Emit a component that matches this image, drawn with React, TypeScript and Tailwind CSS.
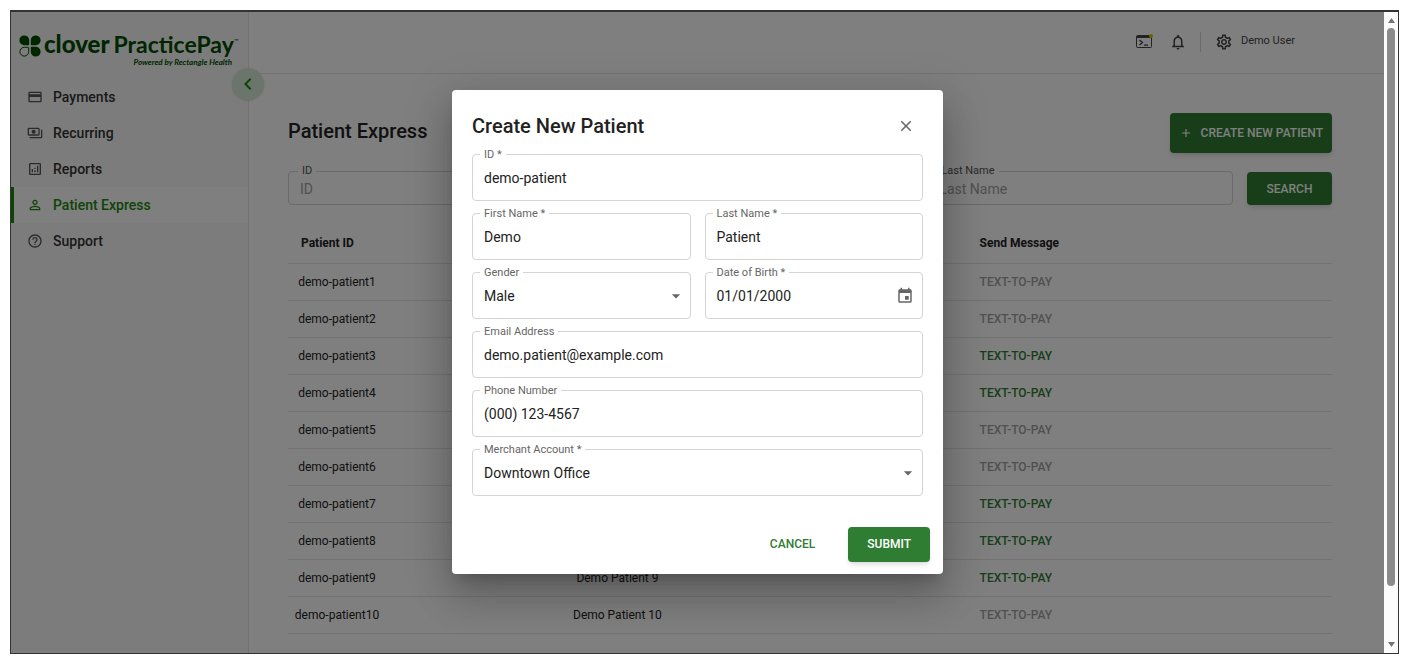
import { useState } from "react"
import type { ReactNode } from "react"
import {
  MdAdd,
  MdArrowDropDown,
  MdChevronLeft,
  MdClose,
  MdCreditCard,
  MdEvent,
  MdHelpOutline,
  MdNotificationsNone,
  MdOutlineAnalytics,
  MdOutlinePayments,
  MdOutlineSettings,
  MdPersonOutline,
} from "react-icons/md"

const navItems = [
  { label: "Payments", icon: MdCreditCard },
  { label: "Recurring", icon: MdOutlinePayments },
  { label: "Reports", icon: MdOutlineAnalytics },
  { label: "Patient Express", icon: MdPersonOutline, active: true },
  { label: "Support", icon: MdHelpOutline },
]

const patients = [
  { id: "demo-patient1", name: "Demo Patient 1", canText: false },
  { id: "demo-patient2", name: "Demo Patient 2", canText: false },
  { id: "demo-patient3", name: "Demo Patient 3", canText: true },
  { id: "demo-patient4", name: "Demo Patient 4", canText: true },
  { id: "demo-patient5", name: "Demo Patient 5", canText: false },
  { id: "demo-patient6", name: "Demo Patient 6", canText: false },
  { id: "demo-patient7", name: "Demo Patient 7", canText: true },
  { id: "demo-patient8", name: "Demo Patient 8", canText: true },
  { id: "demo-patient9", name: "Demo Patient 9", canText: true },
  { id: "demo-patient10", name: "Demo Patient 10", canText: false },
]

function Logo() {
  return (
    <div className="flex h-[67px] flex-col pt-5 pl-2 font-[Lato,sans-serif] whitespace-nowrap text-[#004d00]">
      <div className="flex h-6 items-center">
        <svg className="mt-1 mr-[3px] h-[22px] w-[22px] shrink-0" viewBox="0 0 22 22" fill="currentColor">
          <path d="M5.3 0.4A4.9 4.9 0 0 1 10.2 5.3V9.4Q10.2 10.2 9.4 10.2H5.3A4.9 4.9 0 0 1 5.3 0.4Z" />
          <path d="M16.7 0.4A4.9 4.9 0 0 0 11.8 5.3V9.4Q11.8 10.2 12.6 10.2H16.7A4.9 4.9 0 0 0 16.7 0.4Z" />
          <path d="M16.7 21.6A4.9 4.9 0 0 1 11.8 16.7V12.6Q11.8 11.8 12.6 11.8H16.7A4.9 4.9 0 0 1 16.7 21.6Z" />
          <path
            d="M5.3 21.1A4.4 4.4 0 0 0 9.7 16.7V12.7Q9.7 12.3 9.3 12.3H5.3A4.4 4.4 0 0 0 5.3 21.1Z"
            fill="none"
            stroke="currentColor"
            strokeWidth="1"
          />
        </svg>
        <span className="text-2xl leading-6 font-black">clover</span>
        <span className="ml-1 text-[23px] leading-6 font-bold">PracticePay</span>
        <sup className="text-[6px]">™</sup>
      </div>
      <p className="pr-4 text-right text-[8px] leading-3 font-bold italic">Powered by Rectangle Health</p>
    </div>
  )
}

function Sidebar() {
  return (
    <aside className="relative w-[238px] shrink-0 border-r border-neutral-200 bg-[#f9f9f9]">
      <Logo />
      <nav>
        {navItems.map(({ label, icon: Icon, active }) => (
          <a
            key={label}
            href="#"
            className={
              active
                ? "flex h-9 items-center gap-[10px] border-l-3 border-[#1b8a0b] bg-white pl-[13px] text-sm font-medium text-[#1b8a0b]"
                : "flex h-9 items-center gap-[10px] border-l-3 border-transparent pl-[13px] text-sm font-medium text-[#333]"
            }
          >
            <Icon className={active ? "h-4 w-4" : "h-4 w-4 text-[#555]"} />
            {label}
          </a>
        ))}
      </nav>
      <button
        aria-label="Collapse menu"
        className="absolute top-14 -right-4 flex h-8 w-8 items-center justify-center rounded-full bg-[#d6ead7] text-[#1b8a0b] shadow"
      >
        <MdChevronLeft className="h-6 w-6" />
      </button>
    </aside>
  )
}

function Header() {
  return (
    <header className="flex h-[62px] items-center justify-end border-b border-neutral-200 pr-[89px] pb-[2px] text-[#444]">
      <button aria-label="Terminal" className="relative mr-4">
        <svg className="h-[18px] w-[18px]" viewBox="0 0 18 18" fill="none" stroke="currentColor">
          <rect x="1.5" y="2.5" width="15" height="12" rx="1" />
          <path d="M1.5 4H16.5" strokeWidth="2" />
          <path d="M4.5 7L7.5 9.5L4.5 12M9 12.2H13" strokeWidth="1.3" />
        </svg>
        <span className="absolute top-px right-0 h-1 w-1 rounded-full bg-[#e6c200]" />
      </button>
      <button aria-label="Notifications" className="mr-[13px]">
        <MdNotificationsNone className="h-[18px] w-[18px]" />
      </button>
      <span className="mr-[14px] h-5 w-px bg-neutral-300" />
      <button className="flex items-center gap-2 text-[11px]">
        <MdOutlineSettings className="h-[18px] w-[18px]" />
        Demo User
      </button>
    </header>
  )
}

function SearchField({ id, label }: { id: string; label: string }) {
  return (
    <fieldset className="h-10 min-w-0 flex-1 rounded border border-neutral-300 pr-2 pl-[7px]">
      <legend className="ml-[2px] px-1 text-[11px] leading-3 text-[#555]">
        <label htmlFor={id}>{label}</label>
      </legend>
      <input
        id={id}
        placeholder={label}
        className="block h-6 w-full pl-1 text-sm outline-none placeholder:text-neutral-400"
      />
    </fieldset>
  )
}

function PatientTable() {
  return (
    <table className="mt-[18px] w-full table-fixed border-collapse text-left text-xs text-[#222]">
      <thead>
        <tr className="h-10 border-b border-neutral-200">
          <th className="w-[26%] pl-[13px] font-bold">Patient ID</th>
          <th className="w-[39%] pl-[13px] font-bold">Patient Name</th>
          <th className="pl-[13px] font-bold">Send Message</th>
        </tr>
      </thead>
      <tbody>
        {patients.map((p) => (
          <tr key={p.id} className="h-[37px] border-b border-neutral-200">
            <td>
              <button className="w-[98px] text-center">{p.id}</button>
            </td>
            <td>
              <button className="w-[116px] text-center">{p.name}</button>
            </td>
            <td className="pl-[13px]">
              <button
                disabled={!p.canText}
                className={p.canText ? "font-medium text-[#2e7d32]" : "font-medium text-neutral-400"}
              >
                TEXT-TO-PAY
              </button>
            </td>
          </tr>
        ))}
      </tbody>
    </table>
  )
}

function Field({ id, label, children }: { id: string; label: string; children: ReactNode }) {
  return (
    <fieldset className="relative h-[52px] min-w-0 rounded border border-neutral-300 pr-2 pl-[7px]">
      <legend className="px-1 text-[11px] leading-3 text-[#666]">
        <label htmlFor={id}>{label}</label>
      </legend>
      {children}
    </fieldset>
  )
}

const controlClass = "block h-[34px] w-full appearance-none bg-transparent pl-1 text-sm text-[#222] outline-none"

function TextField({ id, label, value }: { id: string; label: string; value: string }) {
  return (
    <Field id={id} label={label}>
      <input id={id} defaultValue={value} className={controlClass} />
    </Field>
  )
}

function SelectField({ id, label, options }: { id: string; label: string; options: string[] }) {
  return (
    <Field id={id} label={label}>
      <select id={id} className={controlClass}>
        {options.map((o) => (
          <option key={o}>{o}</option>
        ))}
      </select>
      <MdArrowDropDown className="pointer-events-none absolute top-[7px] right-1 h-5 w-5 text-[#666]" />
    </Field>
  )
}

function CreatePatientDialog({ onClose }: { onClose: () => void }) {
  return (
    <div className="absolute inset-0 flex items-center justify-center bg-black/50 pb-[2px]">
      <form
        role="dialog"
        aria-labelledby="dialog-title"
        onSubmit={(e) => e.preventDefault()}
        className="w-full max-w-[491px] rounded bg-white pt-5 pb-3 shadow-[0_11px_15px_-7px_rgba(0,0,0,0.2),0_24px_38px_3px_rgba(0,0,0,0.14),0_9px_46px_8px_rgba(0,0,0,0.12)]"
      >
        <div className="mb-[7px] flex h-8 items-center justify-between pr-7 pl-5">
          <h2 id="dialog-title" className="text-xl font-medium text-[#222]">
            Create New Patient
          </h2>
          <button type="button" aria-label="Close" onClick={onClose} className="text-[#666]">
            <MdClose className="h-[18px] w-[18px]" />
          </button>
        </div>

        <div className="flex flex-col gap-[7px] px-5">
          <TextField id="patient-id" label="ID *" value="demo-patient" />
          <div className="grid grid-cols-2 gap-x-[14px] gap-y-[7px]">
            <TextField id="first-name" label="First Name *" value="Demo" />
            <TextField id="last-name" label="Last Name *" value="Patient" />
            <SelectField id="gender" label="Gender" options={["Male", "Female", "Other"]} />
            <Field id="dob" label="Date of Birth *">
              <div className="flex items-center">
                <input id="dob" defaultValue="01/01/2000" className={controlClass} />
                <button type="button" aria-label="Choose date" className="shrink-0 text-[#666]">
                  <MdEvent className="h-[18px] w-[18px]" />
                </button>
              </div>
            </Field>
          </div>
          <TextField id="email" label="Email Address" value="demo.patient@example.com" />
          <TextField id="phone" label="Phone Number" value="(000) 123-4567" />
          <SelectField id="merchant" label="Merchant Account *" options={["Downtown Office"]} />
        </div>

        <div className="mt-[31px] flex justify-end gap-[14px] pr-[13px] text-xs font-medium">
          <button type="button" onClick={onClose} className="h-[35px] px-[19px] text-[#2e7d32]">
            CANCEL
          </button>
          <button type="submit" className="h-[35px] rounded bg-[#2e7d32] px-[19px] text-white shadow-md">
            SUBMIT
          </button>
        </div>
      </form>
    </div>
  )
}

function ScrollRail() {
  return (
    <div className="flex w-[14px] shrink-0 flex-col items-center bg-[#fcfcfc] py-[6px]">
      <svg className="h-[5px] w-[7px] text-neutral-500" viewBox="0 0 7 5" fill="currentColor">
        <path d="M3.5 0L7 5H0Z" />
      </svg>
      <div className="mt-[5px] w-2 flex-1 rounded-full bg-[#8b8b8b]" />
      <svg className="mt-14 h-[5px] w-[7px] text-neutral-500" viewBox="0 0 7 5" fill="currentColor">
        <path d="M3.5 5L0 0H7Z" />
      </svg>
    </div>
  )
}

export default function App() {
  const [dialogOpen, setDialogOpen] = useState(true)

  return (
    <div className="flex min-h-screen bg-white pt-[10px] pr-[11px] pb-3 pl-[10px] font-[Roboto,sans-serif]">
      <div className="flex flex-1 border border-t-2 border-[#333]">
        <div className="relative flex min-w-0 flex-1 bg-white">
          <Sidebar />
          <div className="flex min-w-0 flex-1 flex-col">
            <Header />
            <main className="pt-[39px] pr-[52px] pb-4 pl-[39px]">
              <div className="flex items-start justify-between">
                <h1 className="pt-1 text-xl font-medium text-[#222]">Patient Express</h1>
                <button
                  onClick={() => setDialogOpen(true)}
                  className="flex h-10 items-center gap-2 rounded bg-[#2e7d32] px-[9px] text-xs font-medium text-white shadow-md"
                >
                  <MdAdd className="h-[14px] w-[14px]" />
                  CREATE NEW PATIENT
                </button>
              </div>
              <div className="mt-3 flex items-end gap-[14px]">
                <SearchField id="search-id" label="ID" />
                <SearchField id="search-first" label="First Name" />
                <SearchField id="search-last" label="Last Name" />
                <button className="h-[33px] w-[85px] rounded bg-[#2e7d32] text-xs font-medium text-white shadow-md">
                  SEARCH
                </button>
              </div>
              <PatientTable />
            </main>
          </div>
          {dialogOpen && <CreatePatientDialog onClose={() => setDialogOpen(false)} />}
        </div>
        <ScrollRail />
      </div>
    </div>
  )
}
